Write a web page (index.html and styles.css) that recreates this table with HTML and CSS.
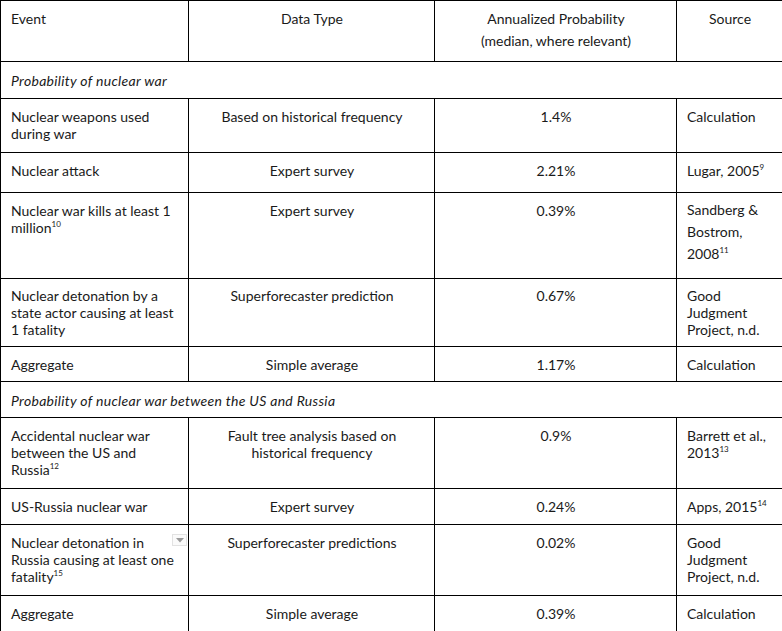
FILE: index.html
```html
<!DOCTYPE html>
<html>
<head>
<meta charset="utf-8">
<link rel="stylesheet" href="styles.css">
</head>
<body>
<table class="data">
  <colgroup>
    <col class="c-event">
    <col class="c-type">
    <col class="c-prob">
    <col class="c-src">
  </colgroup>
  <tr class="head h61">
    <td>Event</td>
    <td class="center">Data Type</td>
    <td class="center">Annualized Probability<br>(median, where relevant)</td>
    <td class="center">Source</td>
  </tr>
  <tr class="section h37">
    <td colspan="4">Probability of nuclear war</td>
  </tr>
  <tr class="h54">
    <td>Nuclear weapons used during war</td>
    <td class="center">Based on historical frequency</td>
    <td class="center">1.4%</td>
    <td>Calculation</td>
  </tr>
  <tr class="h40">
    <td>Nuclear attack</td>
    <td class="center">Expert survey</td>
    <td class="center">2.21%</td>
    <td>Lugar, 2005<sup>9</sup></td>
  </tr>
  <tr class="h86">
    <td>Nuclear war kills at least 1 million<sup>10</sup></td>
    <td class="center">Expert survey</td>
    <td class="center">0.39%</td>
    <td class="tall">Sandberg &amp; Bostrom, 2008<sup>11</sup></td>
  </tr>
  <tr class="h68 snug">
    <td>Nuclear detonation by a state actor causing at least 1 fatality</td>
    <td class="center">Superforecaster prediction</td>
    <td class="center">0.67%</td>
    <td>Good Judgment Project, n.d.</td>
  </tr>
  <tr class="h35">
    <td>Aggregate</td>
    <td class="center">Simple average</td>
    <td class="center">1.17%</td>
    <td>Calculation</td>
  </tr>
  <tr class="section h36">
    <td colspan="4">Probability of nuclear war between the US and Russia</td>
  </tr>
  <tr class="h71">
    <td>Accidental nuclear war between the US and Russia<sup>12</sup></td>
    <td class="center">Fault tree analysis based on historical frequency</td>
    <td class="center">0.9%</td>
    <td>Barrett et al., 2013<sup>13</sup></td>
  </tr>
  <tr class="h36">
    <td>US-Russia nuclear war</td>
    <td class="center">Expert survey</td>
    <td class="center">0.24%</td>
    <td>Apps, 2015<sup>14</sup></td>
  </tr>
  <tr class="h71">
    <td class="has-menu">Nuclear detonation in Russia causing at least one fatality<sup>15</sup><span class="menu-btn"><svg width="8" height="5" viewBox="0 0 8 5"><path d="M0 0H8L4 4.5Z" fill="#9a9a9a"/></svg></span></td>
    <td class="center">Superforecaster predictions</td>
    <td class="center">0.02%</td>
    <td>Good Judgment Project, n.d.</td>
  </tr>
  <tr class="h36">
    <td>Aggregate</td>
    <td class="center">Simple average</td>
    <td class="center">0.39%</td>
    <td>Calculation</td>
  </tr>
</table>
</body>
</html>
```

FILE: styles.css
```css
html, body {
  margin: 0;
  padding: 0;
  background: #fff;
}
body {
  font-family: Lato, "Liberation Sans", sans-serif;
  font-size: 14px;
  color: #1a1a1a;
  overflow: hidden;
}
.data {
  border-collapse: collapse;
  table-layout: fixed;
  width: 782px;
}
.c-event { width: 188px; }
.c-type { width: 246px; }
.c-prob { width: 242px; }
.c-src { width: 106px; }
.data td {
  border: 1px solid #000;
  padding: 9px 9px 0 10px;
  vertical-align: top;
  line-height: 17px;
  text-align: left;
}
.data td.center { text-align: center; }
.head td { line-height: 22px; padding-top: 7px; }
.section td { font-style: italic; padding-top: 10px; letter-spacing: 0.3px; }
.snug td { padding-top: 8px; }
.data td.tall { line-height: 22px; padding-top: 6px; }
sup {
  font-size: 8px;
  line-height: 8px;
  vertical-align: 6px;
}
.has-menu { position: relative; }
.menu-btn {
  position: absolute;
  top: 9px;
  left: 171px;
  width: 13px;
  height: 10px;
  border: 1px solid #e2e2e2;
  background: #fafafa;
  display: flex;
  align-items: center;
  justify-content: center;
}
.h61 { height: 61px; }
.h37 { height: 37px; }
.h54 { height: 54px; }
.h40 { height: 40px; }
.h86 { height: 86px; }
.h68 { height: 68px; }
.h35 { height: 35px; }
.h36 { height: 36px; }
.h71 { height: 71px; }
```
